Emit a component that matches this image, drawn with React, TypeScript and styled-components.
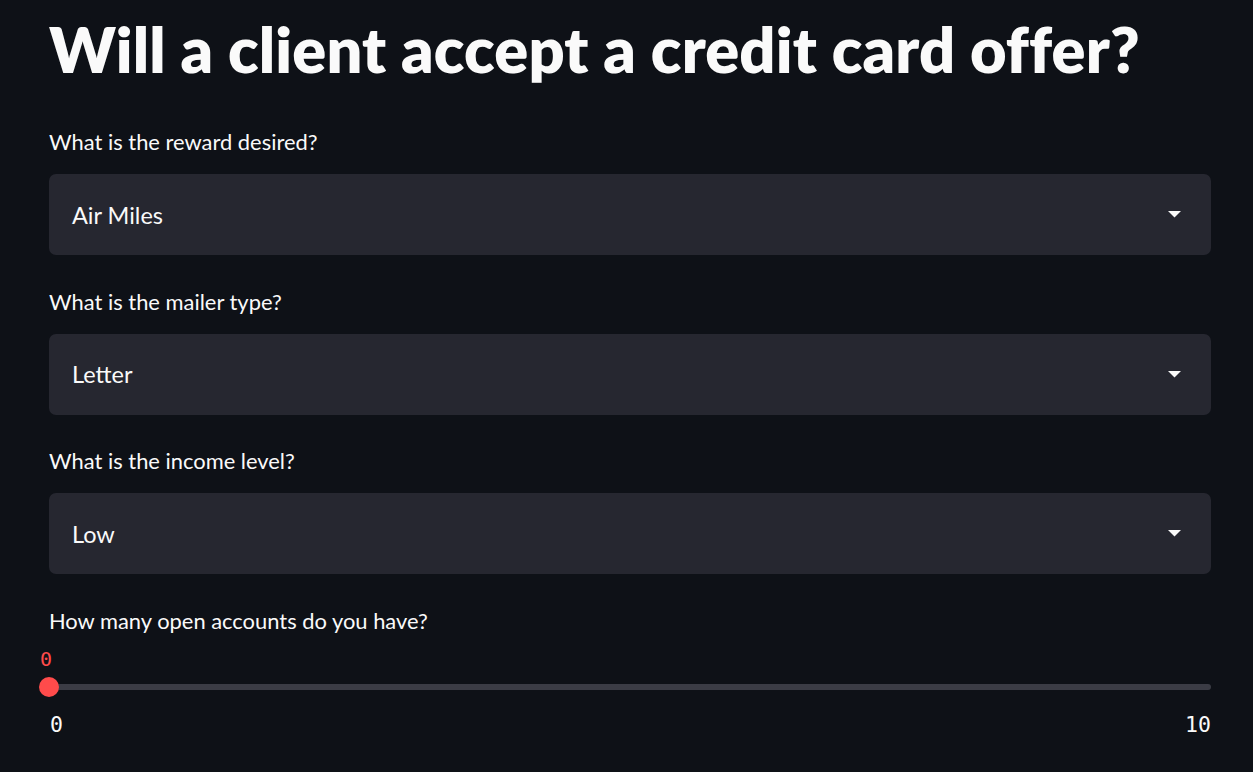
import React from "react";
import styled, { createGlobalStyle } from "styled-components";

const Global = createGlobalStyle`
  html, body { margin: 0; padding: 0; background: #0e1117; }
  body { font-family: "Lato", "Noto Sans", sans-serif; color: #fafafa; }
`;

const Page = styled.main`
  width: 1162px;
  padding: 10px 0 0 49px;
  display: flex;
  flex-direction: column;
`;

const Title = styled.h1`
  margin: 0;
  font-family: "Lato", "Noto Sans", sans-serif;
  font-weight: 800;
  font-size: 63px;
  line-height: 78px;
  letter-spacing: 0.15px;
  color: #fafafa;
`;

const Field = styled.section<{ $top: number }>`
  display: flex;
  flex-direction: column;
  margin-top: ${(p) => p.$top}px;
`;

const Label = styled.label<{ $gap?: number }>`
  font-size: 21.9px;
  line-height: 30px;
  color: #fafafa;
  margin-bottom: ${(p) => (p.$gap ?? 17)}px;
`;

const Select = styled.div`
  height: 81px;
  background: #262730;
  border-radius: 7px;
  display: flex;
  align-items: center;
  justify-content: space-between;
  padding: 0 30px 0 23px;
  box-sizing: border-box;
  font-size: 23.5px;
  color: #fafafa;
`;

const Caret = () => (
  <svg width="13" height="7" viewBox="0 0 13 7">
    <path d="M0 0 L13 0 L6.5 6.5 Z" fill="#fafafa" />
  </svg>
);

const SliderValue = styled.div`
  font-family: "DejaVu Sans Mono", "Liberation Mono", monospace;
  font-size: 20px;
  line-height: 24px;
  color: #ff4b4b;
  margin-left: -9px;
  margin-top: 11px;
`;

const TrackWrap = styled.div`
  position: relative;
  height: 22px;
  display: flex;
  align-items: center;
  margin-top: 5px;
`;

const Track = styled.div`
  flex: 1;
  height: 6px;
  border-radius: 3px;
  background: #3b3c45;
`;

const Thumb = styled.div`
  position: absolute;
  left: -10px;
  top: 1px;
  width: 20px;
  height: 20px;
  border-radius: 50%;
  background: #ff4b4b;
`;

const TickRow = styled.div`
  display: flex;
  justify-content: space-between;
  font-family: "DejaVu Sans Mono", "Liberation Mono", monospace;
  font-size: 21.5px;
  line-height: 24px;
  color: #fafafa;
  margin-top: 15px;
  padding-left: 1px;
`;

const fields = [
  { label: "What is the reward desired?", value: "Air Miles" },
  { label: "What is the mailer type?", value: "Letter" },
  { label: "What is the income level?", value: "Low" },
];

export default function App() {
  return (
    <>
      <Global />
      <Page>
        <Title>Will a client accept a credit card offer?</Title>
        {fields.map((f, i) => (
          <Field key={f.label} $top={i === 0 ? 39 : 31.5}>
            <Label>{f.label}</Label>
            <Select>
              <span>{f.value}</span>
              <Caret />
            </Select>
          </Field>
        ))}
        <Field $top={32}>
          <Label $gap={0}>How many open accounts do you have?</Label>
          <SliderValue>0</SliderValue>
          <TrackWrap>
            <Track />
            <Thumb />
          </TrackWrap>
          <TickRow>
            <span>0</span>
            <span>10</span>
          </TickRow>
        </Field>
      </Page>
    </>
  );
}
